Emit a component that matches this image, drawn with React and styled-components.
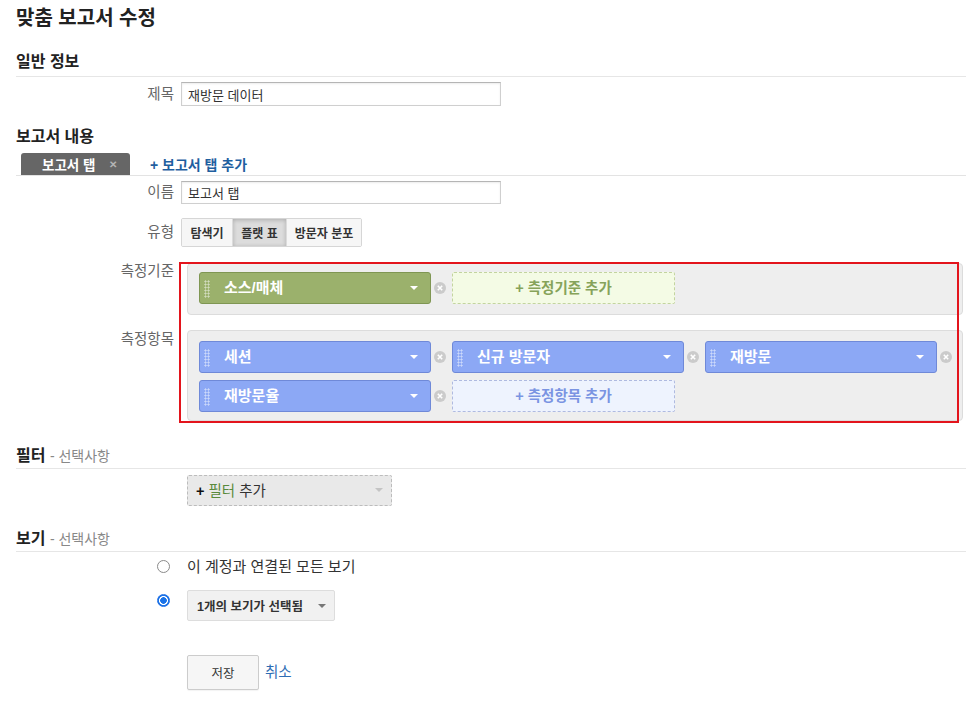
import React from "react";
import styled, { createGlobalStyle } from "styled-components";

const GlobalStyle = createGlobalStyle`
  body {
    margin: 0;
    background: #fff;
    color: #333;
    font-family: "Liberation Sans", "Noto Sans CJK KR", sans-serif;
  }
`;

const chipColors = {
  green: { bg: "#9bb16c", border: "#7f9653" },
  blue: { bg: "#8ca8f5", border: "#6f89d8" },
};

const addColors = {
  green: { bg: "#f4fbe5", border: "#c3d49f", text: "#86a35a" },
  blue: { bg: "#eef3fe", border: "#afbae0", text: "#7a94e2" },
};

function Remove() {
  return (
    <RemoveIcon viewBox="0 0 12 12">
      <circle cx="6" cy="6" r="6" fill="#cbcbcb" />
      <path d="M3.8 3.8l4.4 4.4M8.2 3.8l-4.4 4.4" stroke="#fff" strokeWidth="1.6" />
    </RemoveIcon>
  );
}

function FieldChip({ label, color }) {
  return (
    <ChipUnit>
      <Chip $color={color}>
        <Grip />
        <ChipText>{label}</ChipText>
        <Caret $color="#fff" />
      </Chip>
      <Remove />
    </ChipUnit>
  );
}

function App() {
  return (
    <Page>
      <GlobalStyle />
      <Title>맞춤 보고서 수정</Title>

      <SectionHeading $top={22} $line>
        일반 정보
      </SectionHeading>
      <Row $top={5}>
        <Label $lh={24}>제목</Label>
        <div>
          <TextInput defaultValue="재방문 데이터" $h={24} />
        </div>
      </Row>

      <SectionHeading $top={21}>보고서 내용</SectionHeading>
      <TabBar>
        <Tab>
          보고서 탭<TabClose>✕</TabClose>
        </Tab>
        <AddTabLink href="#">+ 보고서 탭 추가</AddTabLink>
      </TabBar>
      <Row $top={5}>
        <Label $lh={23}>이름</Label>
        <div>
          <TextInput defaultValue="보고서 탭" $h={23} />
        </div>
      </Row>
      <Row $top={14}>
        <Label $lh={29}>유형</Label>
        <div>
          <ButtonGroup>
            <GroupButton $w={50}>탐색기</GroupButton>
            <GroupButton $w={54} $pressed>
              플랫 표
            </GroupButton>
            <GroupButton $w={75}>방문자 분포</GroupButton>
          </ButtonGroup>
        </div>
      </Row>

      <HighlightArea>
        <Row>
          <Label $lh={16}>측정기준</Label>
          <Panel $pt={8} $pb={10}>
            <ChipList>
              <FieldChip label="소스/매체" color="green" />
              <AddBox $color="green">+ 측정기준 추가</AddBox>
            </ChipList>
          </Panel>
        </Row>
        <Row $top={15}>
          <Label $lh={18}>측정항목</Label>
          <Panel $pt={10} $pb={8}>
            <ChipList>
              <FieldChip label="세션" color="blue" />
              <FieldChip label="신규 방문자" color="blue" />
              <FieldChip label="재방문" color="blue" />
              <FieldChip label="재방문율" color="blue" />
              <AddBox $color="blue">+ 측정항목 추가</AddBox>
            </ChipList>
          </Panel>
        </Row>
        <RedFrame />
      </HighlightArea>

      <SectionHeading $top={23} $line $pad={2}>
        필터 <Optional>- 선택사항</Optional>
      </SectionHeading>
      <Row $top={6}>
        <div />
        <FilterSelect>
          <span>
            <Plus>+</Plus> <FilterWord>필터</FilterWord> 추가
          </span>
          <Caret $color="#c4c4c4" />
        </FilterSelect>
      </Row>

      <SectionHeading $top={23} $line $pad={2}>
        보기 <Optional>- 선택사항</Optional>
      </SectionHeading>
      <Row $top={5}>
        <RadioCell $pt={3}>
          <Radio />
        </RadioCell>
        <RadioText>이 계정과 연결된 모든 보기</RadioText>
      </Row>
      <Row $top={13}>
        <RadioCell $pt={4}>
          <Radio $checked />
        </RadioCell>
        <div>
          <ViewSelect>
            1개의 보기가 선택됨
            <Caret $color="#777" />
          </ViewSelect>
        </div>
      </Row>

      <Row $top={34}>
        <div />
        <Actions>
          <SaveButton>저장</SaveButton>
          <CancelLink href="#">취소</CancelLink>
        </Actions>
      </Row>
    </Page>
  );
}

export default App;

const Page = styled.div`
  padding: 0 0 20px 16px;
`;

const Title = styled.h1`
  margin: 0;
  padding-top: 6px;
  font-size: 20px;
  line-height: 24px;
  font-weight: bold;
  color: #222;
`;

const SectionHeading = styled.h2`
  margin: ${(p) => p.$top || 0}px 0 0;
  font-size: 16px;
  line-height: 20px;
  font-weight: bold;
  color: #222;
  padding-bottom: ${(p) => (p.$line ? p.$pad ?? 4 : 0)}px;
  border-bottom: ${(p) => (p.$line ? "1px solid #e6e6e6" : "none")};
`;

const Optional = styled.span`
  font-weight: normal;
  font-size: 14px;
  color: #888;
`;

const Row = styled.div`
  display: grid;
  grid-template-columns: 165px 1fr;
  align-items: start;
  margin-top: ${(p) => p.$top || 0}px;
`;

const Label = styled.div`
  text-align: right;
  padding-right: 7px;
  font-size: 14.5px;
  line-height: ${(p) => p.$lh}px;
  color: #666;
`;

const TextInput = styled.input`
  display: block;
  width: 320px;
  height: ${(p) => p.$h}px;
  box-sizing: border-box;
  border: 1px solid #cfcfcf;
  border-top-color: #b5b5b5;
  box-shadow: inset 0 1px 2px rgba(0, 0, 0, 0.08);
  padding: 0 6px;
  font-family: inherit;
  font-size: 13px;
  color: #333;
  outline: none;
`;

const TabBar = styled.div`
  display: flex;
  align-items: flex-end;
  gap: 20px;
  height: 22px;
  margin-top: 6px;
  padding-left: 5px;
  border-bottom: 1px solid #e3e3e3;
`;

const Tab = styled.div`
  display: flex;
  align-items: center;
  width: 109px;
  height: 22px;
  box-sizing: border-box;
  padding-left: 21px;
  background: #666;
  border-radius: 3px 3px 0 0;
  color: #fff;
  font-size: 13.5px;
  font-weight: bold;
`;

const TabClose = styled.span`
  margin-left: 14px;
  font-size: 10px;
  font-weight: bold;
  color: #b4b4b4;
`;

const AddTabLink = styled.a`
  align-self: center;
  color: #1f5f9f;
  font-size: 14px;
  font-weight: bold;
  text-decoration: none;
`;

const ButtonGroup = styled.div`
  display: inline-flex;
  height: 29px;
  box-sizing: border-box;
  border: 1px solid #d6d6d6;
  border-radius: 2px;
  overflow: hidden;
`;

const GroupButton = styled.button`
  width: ${(p) => p.$w}px;
  padding: 0;
  border: none;
  border-left: 1px solid #dcdcdc;
  background: ${(p) => (p.$pressed ? "#dcdcdc" : "#f6f6f6")};
  box-shadow: ${(p) => (p.$pressed ? "inset 0 1px 4px rgba(0,0,0,0.22)" : "none")};
  font-family: inherit;
  font-size: 12px;
  font-weight: bold;
  color: #333;
  &:first-child {
    border-left: none;
  }
`;

const HighlightArea = styled.div`
  position: relative;
  margin-top: 15px;
  padding: 1px 0 2px;
`;

const RedFrame = styled.div`
  position: absolute;
  top: 0;
  bottom: 0;
  left: 163px;
  right: 7px;
  border: 2px solid #e3141c;
  pointer-events: none;
`;

const Panel = styled.div`
  margin: 0 3px 0 6px;
  padding: ${(p) => p.$pt}px 0 ${(p) => p.$pb}px 11px;
  background: #eeeeee;
  border: 1px solid #dcdcdc;
  border-radius: 4px;
`;

const ChipList = styled.div`
  display: flex;
  flex-wrap: wrap;
  row-gap: 7px;
`;

const ChipUnit = styled.div`
  display: flex;
  align-items: center;
  width: 253px;
`;

const Chip = styled.div`
  display: flex;
  align-items: center;
  width: 232px;
  height: 32px;
  box-sizing: border-box;
  padding-left: 4px;
  background: ${(p) => chipColors[p.$color].bg};
  border: 1px solid ${(p) => chipColors[p.$color].border};
  border-radius: 3px;
  color: #fff;
  font-size: 15px;
  font-weight: bold;
`;

const Grip = styled.span`
  width: 6px;
  height: 18px;
  margin-top: 2px;
  background: radial-gradient(circle, rgba(255, 255, 255, 0.55) 0.9px, transparent 1.2px) 0 0 / 3px 3px;
`;

const ChipText = styled.span`
  flex: 1;
  margin-left: 14px;
  margin-top: -4px;
`;

const Caret = styled.span`
  width: 0;
  height: 0;
  margin-right: 12px;
  border-left: 4px solid transparent;
  border-right: 4px solid transparent;
  border-top: 4px solid ${(p) => p.$color};
`;

const RemoveIcon = styled.svg`
  width: 12px;
  height: 12px;
  margin-left: 3px;
`;

const AddBox = styled.div`
  display: flex;
  align-items: center;
  justify-content: center;
  width: 223px;
  height: 32px;
  box-sizing: border-box;
  padding-bottom: 4px;
  background: ${(p) => addColors[p.$color].bg};
  border: 1px dashed ${(p) => addColors[p.$color].border};
  border-radius: 2px;
  color: ${(p) => addColors[p.$color].text};
  font-size: 14.5px;
  font-weight: bold;
`;

const FilterSelect = styled.div`
  display: flex;
  align-items: center;
  justify-content: space-between;
  width: 205px;
  height: 31px;
  box-sizing: border-box;
  margin-left: 6px;
  padding-left: 8px;
  padding-bottom: 2px;
  background: #e9e9e9;
  border: 1px dashed #bcbcbc;
  border-radius: 2px;
  font-size: 14.5px;
  color: #333;
  & > ${Caret} {
    margin-right: 8px;
  }
`;

const Plus = styled.b`
  color: #111;
`;

const FilterWord = styled.span`
  color: #5a8a3c;
`;

const RadioCell = styled.div`
  display: flex;
  justify-content: flex-end;
  padding: ${(p) => p.$pt}px 11px 0 0;
`;

const Radio = styled.span`
  width: 13px;
  height: 13px;
  box-sizing: border-box;
  border-radius: 50%;
  border: 1px solid ${(p) => (p.$checked ? "#1f6fe5" : "#8a8a8a")};
  background: ${(p) =>
    p.$checked
      ? "radial-gradient(circle, #1a73e8 0 3px, #ffffff 3.6px 4.2px, #1a73e8 4.8px)"
      : "#fff"};
`;

const RadioText = styled.div`
  margin-left: 6px;
  font-size: 15px;
  line-height: 20px;
  color: #333;
`;

const ViewSelect = styled.div`
  display: inline-flex;
  align-items: center;
  justify-content: space-between;
  width: 148px;
  height: 31px;
  box-sizing: border-box;
  margin-left: 6px;
  padding: 0 0 0 9px;
  background: #f1f1f1;
  border: 1px solid #dddddd;
  border-radius: 2px;
  font-size: 12.5px;
  font-weight: bold;
  color: #333;
  & > ${Caret} {
    margin-right: 8px;
  }
`;

const Actions = styled.div`
  display: flex;
  align-items: center;
  gap: 6px;
  margin-left: 6px;
`;

const SaveButton = styled.button`
  width: 72px;
  height: 35px;
  background: #f6f6f6;
  border: 1px solid #cccccc;
  border-radius: 2px;
  box-shadow: 0 1px 1px rgba(0, 0, 0, 0.05);
  font-family: inherit;
  font-size: 12.5px;
  color: #333;
`;

const CancelLink = styled.a`
  margin-top: -4px;
  color: #2e6db4;
  font-size: 14.5px;
  text-decoration: none;
`;
